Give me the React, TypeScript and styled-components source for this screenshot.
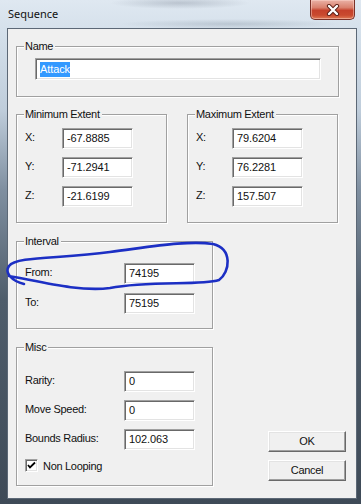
import React from "react";
import styled, { createGlobalStyle } from "styled-components";

const GlobalStyle = createGlobalStyle`
  html, body { margin: 0; padding: 0; background: #3f4b58; }
  * { box-sizing: border-box; }
`;

const Window = styled.div`
  position: relative;
  width: 361px;
  height: 504px;
  display: flex;
  flex-direction: column;
  padding: 0 4px 5px 7px;
  background:
    radial-gradient(ellipse 70px 6px at 180px 3px, rgba(120, 130, 145, 0.35), transparent),
    radial-gradient(ellipse 110px 5px at 230px 24px, rgba(120, 135, 150, 0.3), transparent),
    linear-gradient(
      180deg,
      #dfe8f1 0px,
      #d2dee9 40px,
      #bfcddb 110px,
      #7f8fa0 190px,
      #4f5d6b 300px,
      #3e4a57 504px
    );
  font-family: "Liberation Sans", Arial, sans-serif;
  font-size: 11px;
  color: #000;
`;

const TitleBar = styled.div`
  height: 28px;
  display: flex;
  align-items: flex-start;
  justify-content: space-between;
`;

const Title = styled.span`
  margin-top: 6px;
  margin-left: 1px;
  font-family: "Noto Sans", sans-serif;
  font-size: 11px;
  line-height: 15px;
  color: #101010;
`;

const CloseButton = styled.div`
  width: 45px;
  height: 20px;
  margin-right: 2px;
  border: 1px solid #7a3128;
  border-top: none;
  border-radius: 0 0 5px 5px;
  background: linear-gradient(180deg, #eab2a6 0%, #d9806d 40%, #c5412b 55%, #c94a2f 80%, #df7a55 100%);
  box-shadow: inset 0 0 0 1px rgba(255, 220, 210, 0.45);
  display: flex;
  align-items: center;
  justify-content: center;
`;

const Client = styled.div`
  flex: 1;
  background: #f0f0f0;
  border: 1px solid #5c6876;
  display: flex;
  flex-direction: column;
  padding: 17px 0 0 8px;
  letter-spacing: -0.3px;
  color: #111;
`;

const Group = styled.div<{ $w: number; $h: number; $pt: number; $gap: number }>`
  position: relative;
  width: ${(p) => p.$w}px;
  height: ${(p) => p.$h}px;
  border: 1px solid #a0a0a0;
  box-shadow: inset 1px 1px 0 #fff, 1px 1px 0 #fff;
  padding: ${(p) => p.$pt}px 0 0 8px;
  display: flex;
  flex-direction: column;
  gap: ${(p) => p.$gap}px;
`;

const Legend = styled.span`
  position: absolute;
  left: 7px;
  top: -7px;
  padding: 0 2px 0 1px;
  background: #f0f0f0;
  line-height: 13px;
`;

const Row = styled.div`
  display: flex;
  align-items: flex-start;
`;

const Spacer = styled.div<{ $w: number }>`
  width: ${(p) => p.$w}px;
`;

const Label = styled.span<{ $w: number }>`
  width: ${(p) => p.$w}px;
  padding-top: 3px;
  line-height: 13px;
`;

const Edit = styled.div<{ $w: number; $h?: number }>`
  width: ${(p) => p.$w}px;
  height: ${(p) => p.$h ?? 21}px;
  background: #fff;
  border-style: solid;
  border-width: 1px;
  border-color: #a0a0a0 #fff #fff #a0a0a0;
  box-shadow: inset 1px 1px 0 #696969, inset -1px -1px 0 #e3e3e3;
  padding: 0 0 0 4px;
  display: flex;
  align-items: center;
  line-height: 13px;
  white-space: nowrap;
  letter-spacing: -0.1px;
`;

const Selected = styled.span`
  background: #3399ff;
  color: #fff;
  padding: 1px 0;
  line-height: 13px;
`;

const ExtentRow = styled.div`
  display: flex;
  gap: 20px;
  margin-top: 17px;
`;

const Bottom = styled.div`
  display: flex;
  margin-top: 18px;
`;

const LeftColumn = styled.div`
  display: flex;
  flex-direction: column;
  gap: 18px;
`;

const ButtonColumn = styled.div`
  display: flex;
  flex-direction: column;
  gap: 8px;
  margin-left: 55px;
  margin-top: 190px;
`;

const Button = styled.div`
  width: 78px;
  height: 21px;
  background: #f0f0f0;
  border-style: solid;
  border-width: 1px;
  border-color: #fff #696969 #696969 #fff;
  box-shadow: inset -1px -1px 0 #a0a0a0, inset 1px 1px 0 #e3e3e3;
  display: flex;
  align-items: center;
  justify-content: center;
  line-height: 13px;
`;

const CheckRow = styled.div`
  display: flex;
  align-items: center;
  gap: 5px;
  margin-top: 1px;
`;

const CheckBox = styled.div`
  width: 13px;
  height: 13px;
  background: #fff;
  border-style: solid;
  border-width: 1px;
  border-color: #a0a0a0 #fff #fff #a0a0a0;
  box-shadow: inset 1px 1px 0 #696969, inset -1px -1px 0 #e3e3e3;
  display: flex;
  align-items: center;
  justify-content: center;
`;

const Annotation = styled.svg`
  position: absolute;
  left: 0;
  top: 0;
  pointer-events: none;
`;

type Field = { label: string; value: string };

const minExt: Field[] = [
  { label: "X:", value: "-67.8885" },
  { label: "Y:", value: "-71.2941" },
  { label: "Z:", value: "-21.6199" },
];
const maxExt: Field[] = [
  { label: "X:", value: "79.6204" },
  { label: "Y:", value: "76.2281" },
  { label: "Z:", value: "157.507" },
];
const interval: Field[] = [
  { label: "From:", value: "74195" },
  { label: "To:", value: "75195" },
];
const misc: Field[] = [
  { label: "Rarity:", value: "0" },
  { label: "Move Speed:", value: "0" },
  { label: "Bounds Radius:", value: "102.063" },
];

export default function App() {
  return (
    <>
      <GlobalStyle />
      <Window>
        <TitleBar>
          <Title>Sequence</Title>
          <CloseButton>
            <svg width="14" height="12" viewBox="0 0 14 12">
              <path d="M3 2 L11 10 M11 2 L3 10" stroke="#5a1e16" strokeWidth="4.2" strokeLinecap="round" />
              <path d="M3 2 L11 10 M11 2 L3 10" stroke="#fff" strokeWidth="2.4" strokeLinecap="round" />
            </svg>
          </CloseButton>
        </TitleBar>
        <Client>
          <Group $w={323} $h={51} $pt={11} $gap={0}>
            <Legend>Name</Legend>
            <Row>
              <Spacer $w={10} />
              <Edit $w={286} $h={22}>
                <Selected>Attack</Selected>
              </Edit>
            </Row>
          </Group>
          <ExtentRow>
            <Group $w={151} $h={109} $pt={13} $gap={8}>
              <Legend>Minimum Extent</Legend>
              {minExt.map((f) => (
                <Row key={f.label}>
                  <Label $w={37}>{f.label}</Label>
                  <Edit $w={71}>{f.value}</Edit>
                </Row>
              ))}
            </Group>
            <Group $w={151} $h={109} $pt={13} $gap={8}>
              <Legend>Maximum Extent</Legend>
              {maxExt.map((f) => (
                <Row key={f.label}>
                  <Label $w={36}>{f.label}</Label>
                  <Edit $w={71}>{f.value}</Edit>
                </Row>
              ))}
            </Group>
          </ExtentRow>
          <Bottom>
            <LeftColumn>
              <Group $w={197} $h={88} $pt={21} $gap={9}>
                <Legend>Interval</Legend>
                {interval.map((f) => (
                  <Row key={f.label}>
                    <Label $w={99}>{f.label}</Label>
                    <Edit $w={71}>{f.value}</Edit>
                  </Row>
                ))}
              </Group>
              <Group $w={197} $h={139} $pt={23} $gap={8}>
                <Legend>Misc</Legend>
                {misc.map((f) => (
                  <Row key={f.label}>
                    <Label $w={99}>{f.label}</Label>
                    <Edit $w={71}>{f.value}</Edit>
                  </Row>
                ))}
                <CheckRow>
                  <CheckBox>
                    <svg width="9" height="9" viewBox="0 0 9 9">
                      <path d="M1 4 L3 6.5 L8 1.5" stroke="#000" strokeWidth="1.8" fill="none" />
                    </svg>
                  </CheckBox>
                  <span>Non Looping</span>
                </CheckRow>
              </Group>
            </LeftColumn>
            <ButtonColumn>
              <Button>OK</Button>
              <Button>Cancel</Button>
            </ButtonColumn>
          </Bottom>
        </Client>
        <Annotation width="361" height="504" viewBox="0 0 361 504">
          <path
            d="M24 284 C12 281 4 273 9 266 C16 256 60 259 110 252 C150 247 188 240 213 244 C233 249 230 272 219 280 C200 286 150 280 110 288 C80 292 42 282 9 276"
            stroke="#1c2fc4"
            strokeWidth="2.6"
            fill="none"
            strokeLinecap="round"
          />
        </Annotation>
      </Window>
    </>
  );
}
